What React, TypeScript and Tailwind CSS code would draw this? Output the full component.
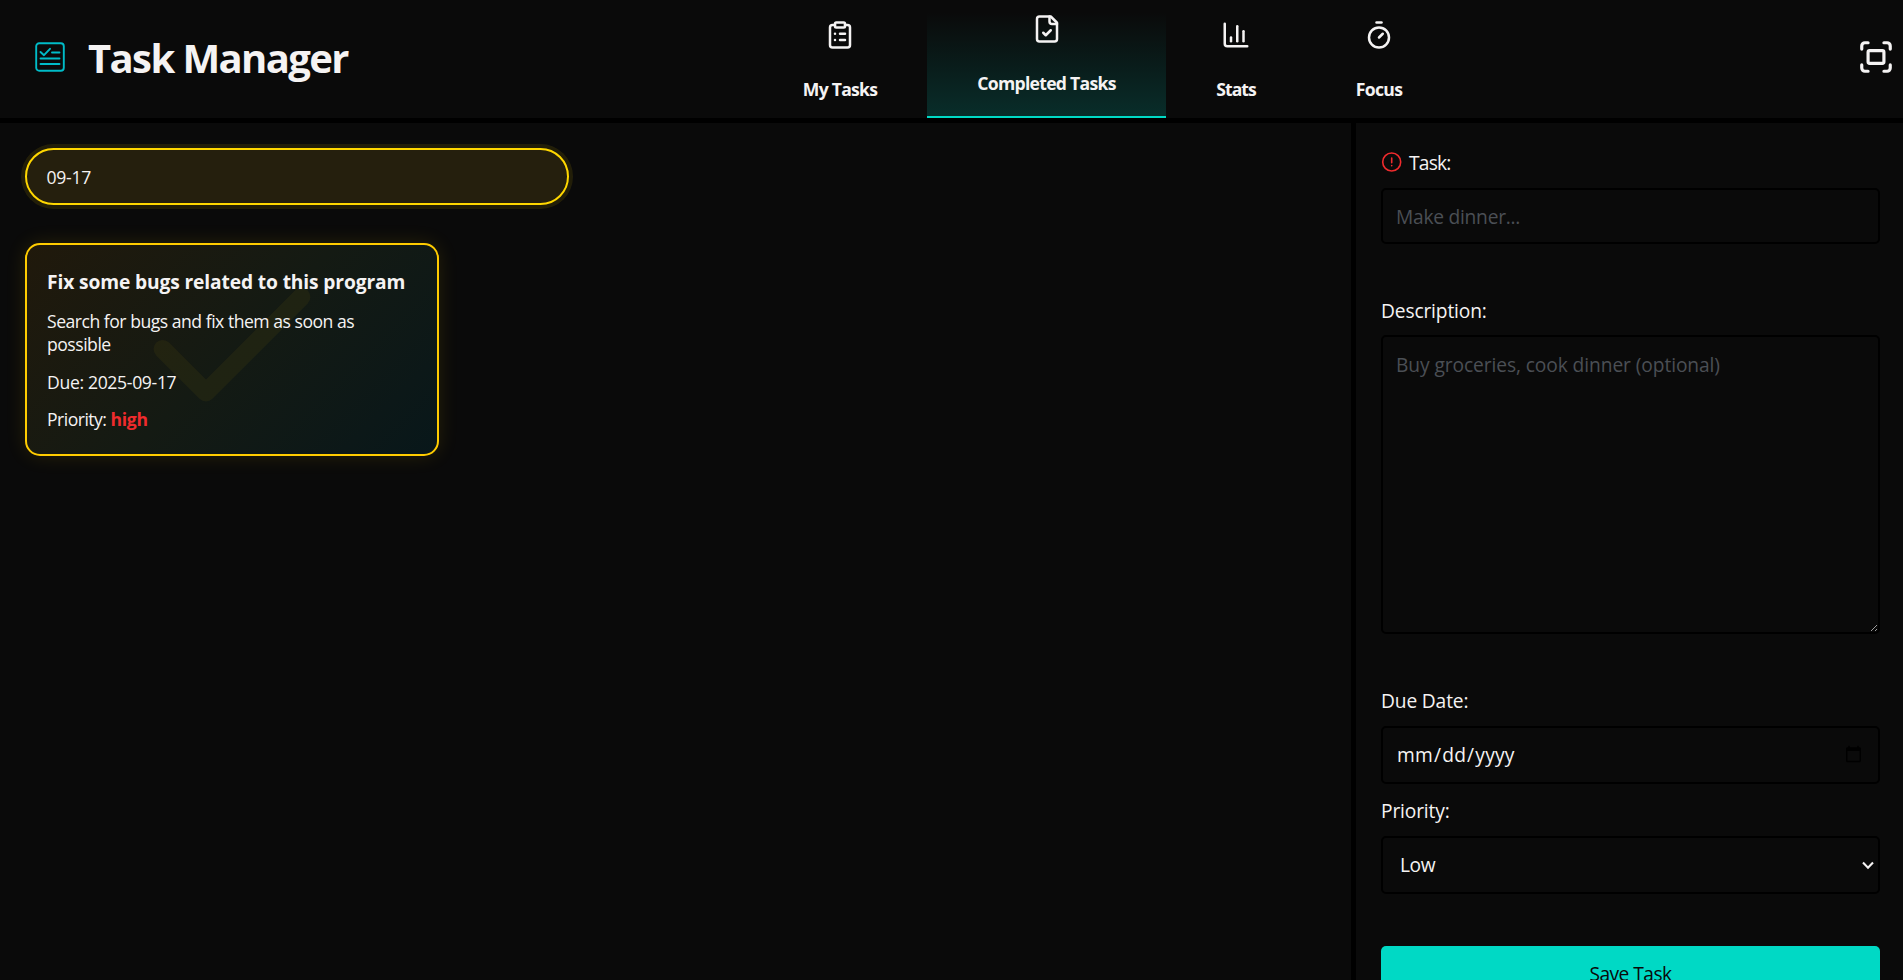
import { ChartColumn, ClipboardList, Fullscreen, Timer } from "lucide-react";
import type { ReactNode } from "react";

function FileCheckIcon() {
  return (
    <svg width="30" height="30" viewBox="0 0 24 24" fill="none" stroke="currentColor" strokeWidth="2" strokeLinecap="round" strokeLinejoin="round">
      <path d="M15 2H6a2 2 0 0 0-2 2v16a2 2 0 0 0 2 2h12a2 2 0 0 0 2-2V7Z" />
      <path d="M14 2v4a2 2 0 0 0 2 2h4" />
      <path d="m9 15 2 2 4-4" />
    </svg>
  );
}

function LogoIcon() {
  return (
    <svg width="30" height="30" viewBox="0 0 30 30" fill="none" stroke="#00bcc8" strokeWidth="1.9" strokeLinecap="round" strokeLinejoin="round">
      <rect x="1.2" y="1.2" width="27.6" height="27.6" rx="3" />
      <path d="M5.5 10 9 13.2 15 6.8" />
      <path d="M17 10.5h7.5M5.5 16.5h19M5.5 22h19" />
    </svg>
  );
}

function Tab({ icon, label, width, tracking, active = false }: { icon: ReactNode; label: string; width: string; tracking: string; active?: boolean }) {
  return (
    <div
      className={`flex flex-col items-center ${width} ${
        active
          ? "mt-3 h-[106px] border-b-2 border-[#00d9c5] bg-linear-to-b from-[#00d9c5]/0 to-[#00d9c5]/17 pt-[2px]"
          : "h-[118px] pt-5"
      }`}
    >
      {icon}
      <span className={`mt-[27px] text-[17.6px] leading-6 font-bold whitespace-nowrap ${tracking}`}>{label}</span>
    </div>
  );
}

const field = "block w-full rounded-[5px] border-2 border-black bg-[#0a0a0a] px-[13px] text-[19.2px] outline-none placeholder:text-[#4b4f55]";
const labelText = "flex h-[26px] items-center text-[19.2px] leading-[26px] tracking-[-0.15px]";

export default function App() {
  return (
    <div className="flex h-screen flex-col overflow-hidden bg-[#0a0a0a] font-['Open_Sans',sans-serif] text-[#f5f3f3]">
      <header className="grid h-[123px] shrink-0 grid-cols-[753px_1fr_auto] border-b-[5px] border-black">
        <div className="flex items-center pl-[35px]">
          <span className="mb-1"><LogoIcon /></span>
          <h1 className="mb-[3px] ml-[23px] text-[40px] leading-[54px] font-bold tracking-[-1.6px]">Task Manager</h1>
        </div>
        <nav className="flex">
          <Tab icon={<ClipboardList size={30} />} label="My Tasks" width="w-[174px]" tracking="tracking-[-0.75px]" />
          <Tab active icon={<FileCheckIcon />} label="Completed Tasks" width="w-[239px]" tracking="tracking-[-0.72px]" />
          <Tab icon={<ChartColumn size={30} />} label="Stats" width="w-[140px]" tracking="tracking-[-0.95px]" />
          <Tab icon={<Timer size={30} />} label="Focus" width="w-[146px]" tracking="tracking-[-0.65px]" />
        </nav>
        <button className="mb-1 flex items-center pr-2">
          <Fullscreen size={38} />
        </button>
      </header>

      <div className="flex min-h-0 flex-1">
        <main className="flex-1 px-[25px] pt-[25px]">
          <div className="flex h-[57px] w-[544px] items-center rounded-full border-2 border-[#ffd700] bg-[#251f0d] pt-px pl-[19.5px] text-[17.6px] tracking-[-0.25px] shadow-[0_0_0_4px_rgba(255,215,0,0.1)]">
            09-17
          </div>

          <article className="relative mt-[38px] h-[213px] w-[414px] rounded-[15px] border-2 border-[#ffcc00] bg-linear-135 from-[#20190b] via-[#141a13] to-[#08171a] px-[20px] pt-[23px] text-[17.6px] leading-[23px] shadow-[0_0_20px_rgba(255,204,0,0.12)]">
            <svg className="absolute top-0 left-[101px]" width="208" height="208" viewBox="0 0 24 24" fill="none" stroke="#ffd700" strokeOpacity="0.05" strokeWidth="2.1" strokeLinecap="round" strokeLinejoin="round">
              <path d="M20 6 9 17l-5-5" />
            </svg>
            <h2 className="relative pt-px text-[19.2px] leading-[25px] font-bold tracking-[-0.12px] whitespace-nowrap">Fix some bugs related to this program</h2>
            <p className="relative mt-[15.5px] w-[330px] tracking-[-0.49px]">Search for bugs and fix them as soon as possible</p>
            <p className="relative mt-[15px] tracking-[-0.34px]">Due: 2025-09-17</p>
            <p className="relative mt-[14.5px] tracking-[-0.52px]">
              Priority: <span className="font-bold tracking-[-0.3px] text-[#ef2b2d]">high</span>
            </p>
          </article>
        </main>

        <aside className="w-[552px] shrink-0 border-l-[5px] border-black pt-[27px] pr-[23px] pl-[25px]">
          <label className={labelText}>
            <svg className="mr-[7px] mb-[3px]" width="21" height="20" viewBox="0 0 21 20" fill="none" stroke="#ef2b2d" strokeWidth="1.6" strokeLinecap="round">
              <circle cx="10.7" cy="10" r="9" />
              <path d="M10.7 6v4.8M10.7 13.6v.1" />
            </svg>
            <span className="tracking-[-0.8px]">Task:</span>
          </label>
          <input className={`${field} mt-3 h-14 tracking-[-0.25px]`} placeholder="Make dinner..." />

          <label className={`${labelText} mt-[53px] pt-px`}>Description:</label>
          <textarea className={`${field} mt-3 h-[299px] resize pt-[14px] leading-[27px] tracking-[-0.09px]`} placeholder="Buy groceries, cook dinner (optional)" />

          <label className={`${labelText} mt-[54px]`}>Due Date:</label>
          <input type="date" className={`${field} mt-3 h-[58px] tracking-[0.2px]`} />

          <label className={`${labelText} mt-[14px]`}>Priority:</label>
          <div className="relative mt-3">
            <select className={`${field} h-[58px] appearance-none pl-[17px] tracking-[-0.4px]`} defaultValue="Low">
              <option>Low</option>
              <option>Medium</option>
              <option>High</option>
            </select>
            <svg className="pointer-events-none absolute top-[25px] right-[6px]" width="12" height="9" viewBox="0 0 12 9" fill="none" stroke="currentColor" strokeWidth="2.1">
              <path d="M1 1.6 6 6.7l5-5.1" />
            </svg>
          </div>

          <button className="mt-[52px] h-14 w-full rounded-[5px] bg-[#00d9c5] text-[19.2px] tracking-[-0.55px] text-[#0a0a0a]">Save Task</button>
        </aside>
      </div>
    </div>
  );
}
